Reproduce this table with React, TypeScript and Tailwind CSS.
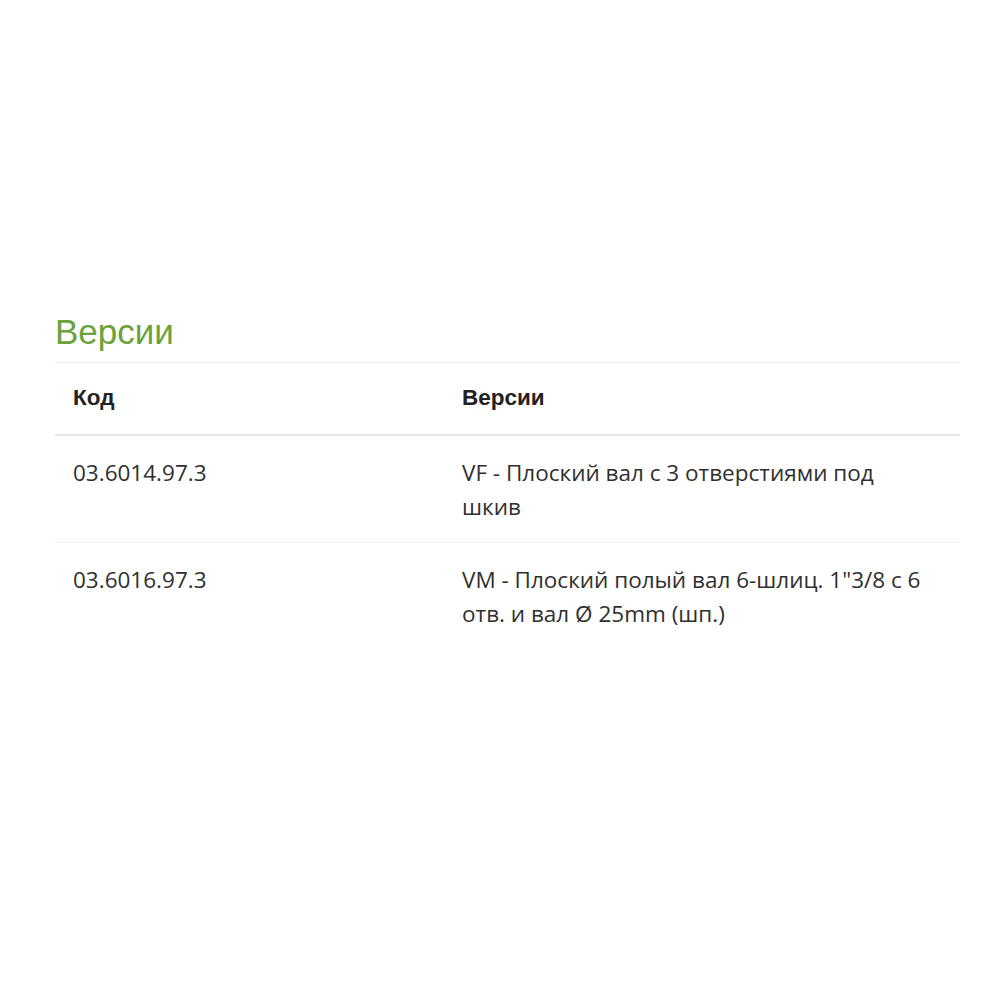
import React from "react";

interface VersionRow {
  code: string;
  version: string;
}

const rows: VersionRow[] = [
  { code: "03.6014.97.3", version: "VF - Плоский вал с 3 отверстиями под шкив" },
  {
    code: "03.6016.97.3",
    version: "VM - Плоский полый вал 6-шлиц. 1\"3/8 с 6 отв. и вал Ø 25mm (шп.)",
  },
];

const App: React.FC = () => {
  return (
    <div className="w-[1000px] h-[1000px] bg-white">
      <section className="pt-[311px] pl-[55px] w-[960px]">
        <h2 className="text-[35px] leading-[42px] text-[#6ba23b] font-['Liberation_Sans',Arial,sans-serif] mb-[9px]">
          Версии
        </h2>
        <table className="w-[905px] border-collapse text-[#2f2f2f] font-['Open_Sans','Noto_Sans',sans-serif]">
          <thead>
            <tr className="border-t border-[#eeeeee] border-b-2 border-b-[#e6e6e6]">
              <th className="w-[389px] h-[72px] pl-[18px] text-left align-middle text-[22.5px] font-bold font-['Liberation_Sans',Arial,sans-serif] text-[#222]">
                Код
              </th>
              <th className="h-[72px] pl-[18px] text-left align-middle text-[22.5px] font-bold font-['Liberation_Sans',Arial,sans-serif] text-[#222]">
                Версии
              </th>
            </tr>
          </thead>
          <tbody>
            {rows.map((row, i) => (
              <tr key={row.code} className={i === 0 ? "border-b border-[#eeeeee]" : ""}>
                <td className="pl-[18px] pt-[20px] pb-[18px] align-top text-[22.5px] leading-[34px]">
                  {row.code}
                </td>
                <td className="pl-[18px] pt-[20px] pb-[18px] align-top text-[22.5px] leading-[34px]">
                  <div className="w-[461px]">{row.version}</div>
                </td>
              </tr>
            ))}
          </tbody>
        </table>
      </section>
    </div>
  );
};

export default App;
